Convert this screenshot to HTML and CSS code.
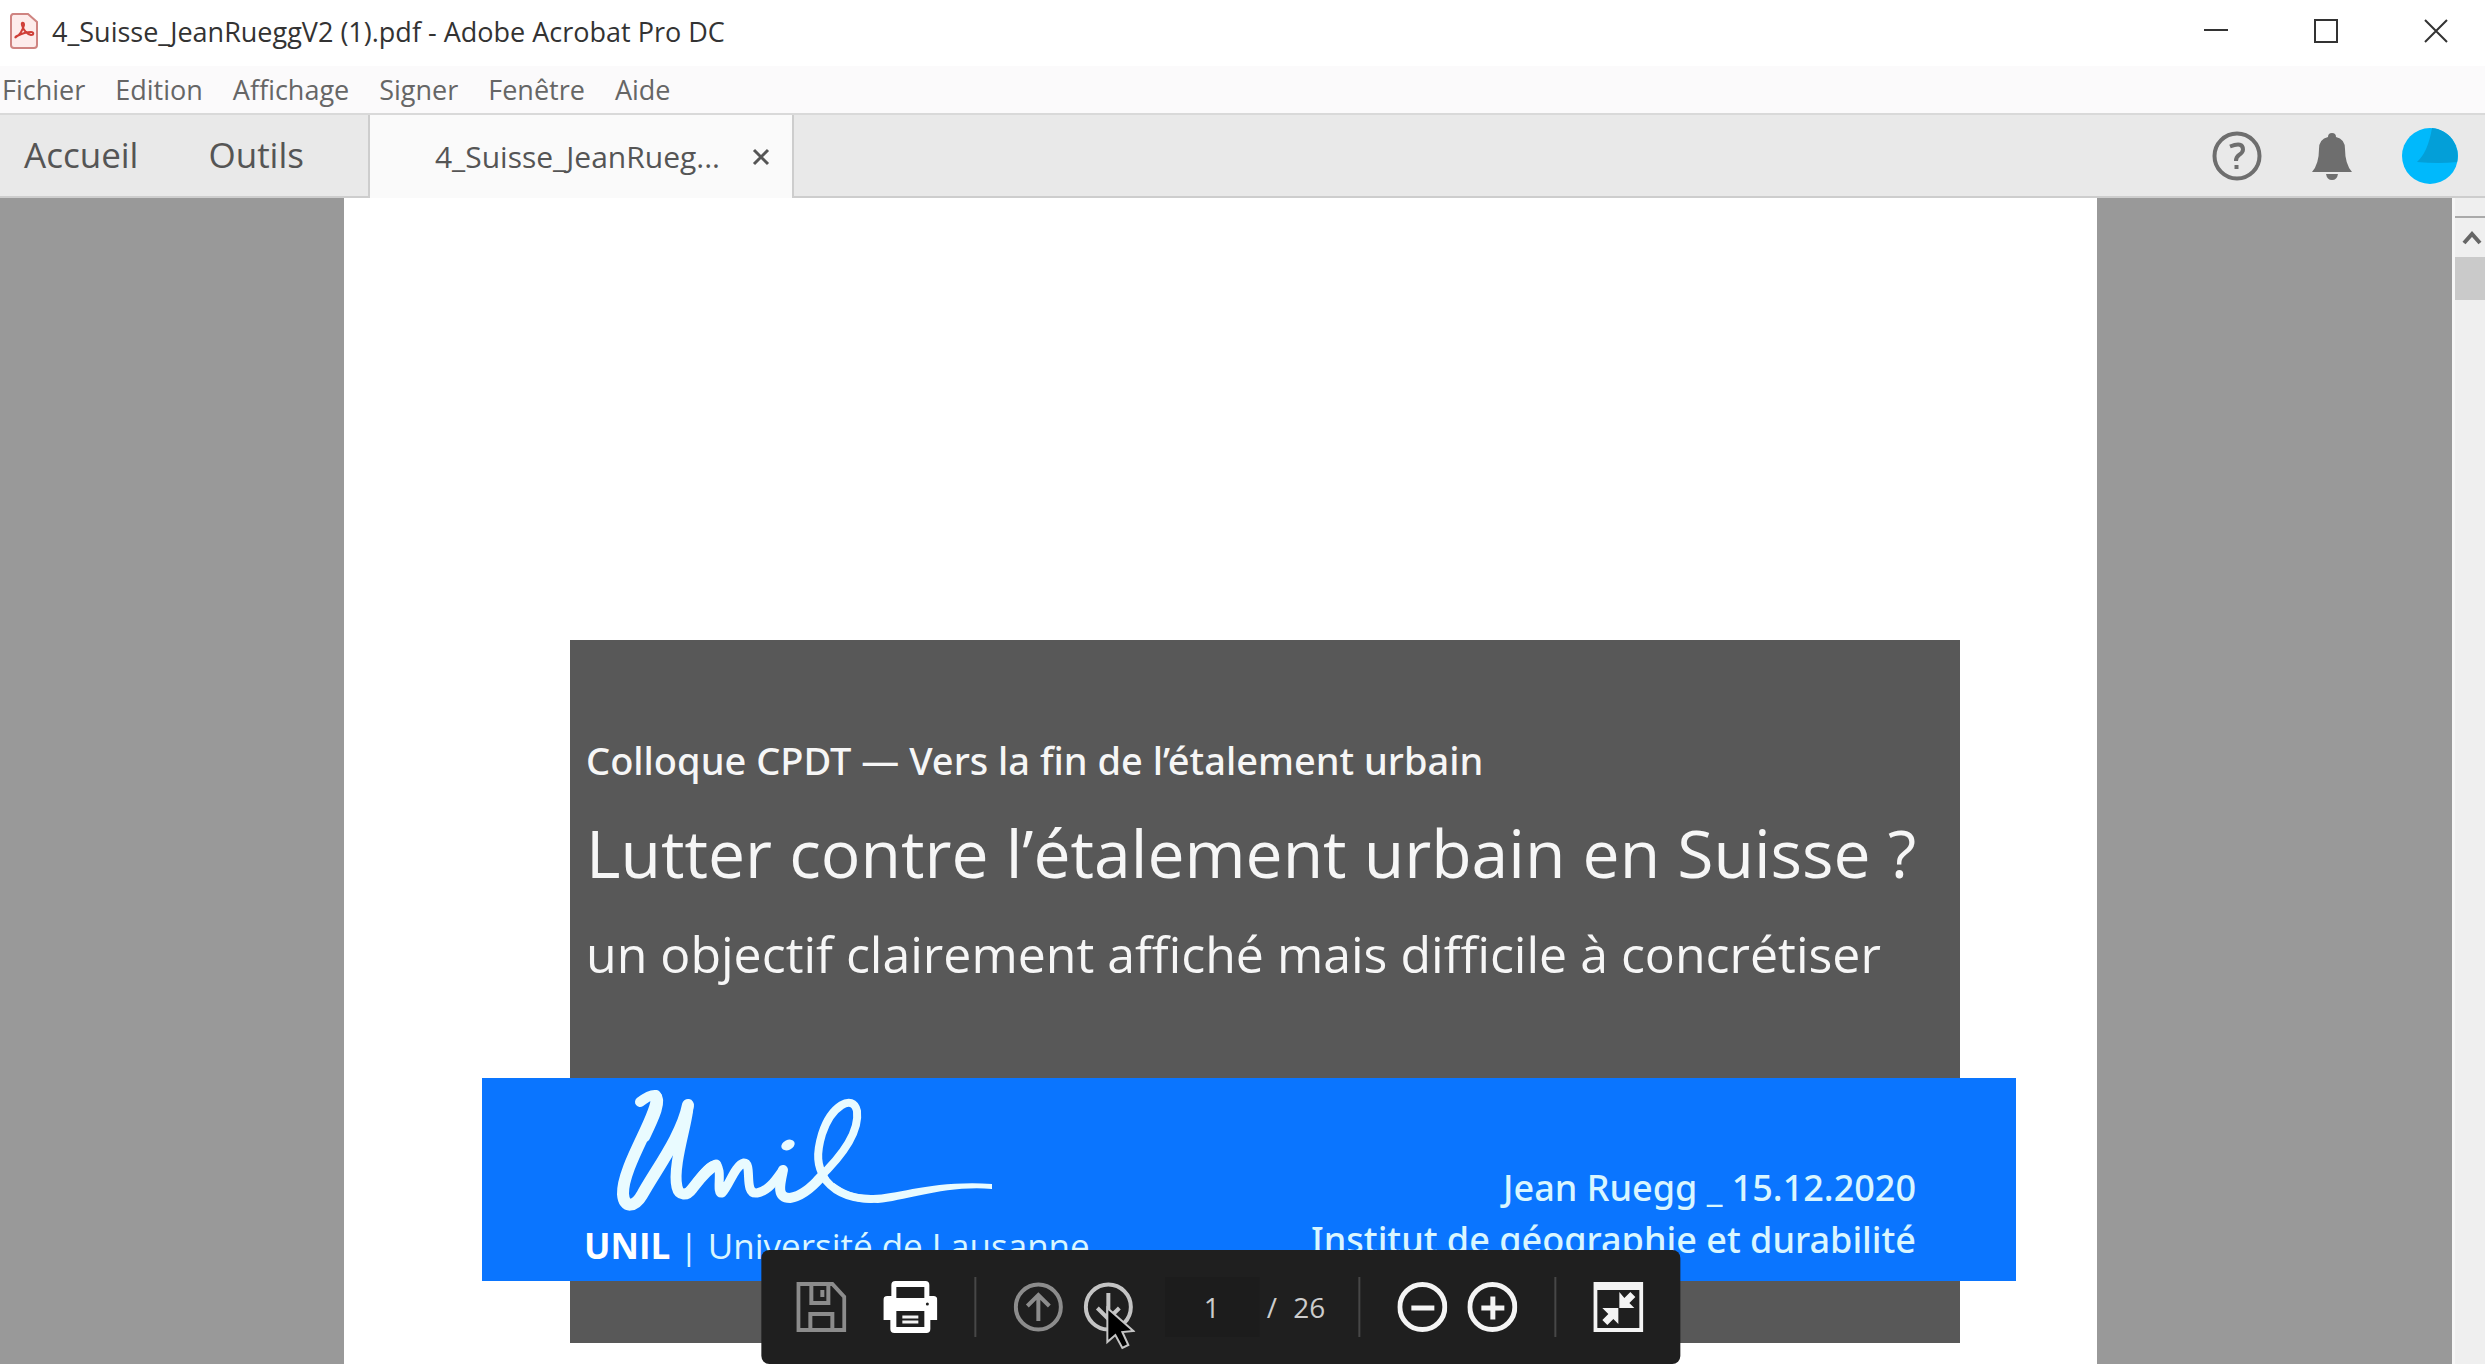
FILE: index.html
```
<!DOCTYPE html>
<html lang="fr">
<head>
    <meta charset="UTF-8">
    <meta name="viewport" content="width=device-width, initial-scale=1.0">
    <title>4_Suisse_JeanRueggV2 (1).pdf - Adobe Acrobat Pro DC</title>
    <link rel="stylesheet" href="styles.css">
</head>
<body>
    <!-- barre de titre -->
    <header class="titlebar">
        <svg class="app_icon" viewBox="0 0 30 38">
            <path d="M4 2h15l9 8v23a3 3 0 0 1-3 3H5a3 3 0 0 1-3-3V5a3 3 0 0 1 2-3z" fill="#fdeceb" stroke="#cf8481" stroke-width="2"/>
            <path d="M7 25c3-1 7-7 8-12 0-3-3-3-2 0 1 5 5 9 9 10 3 0 3-3 0-3-5 0-10 2-14 4-2 1-2 2-1 1z" fill="none" stroke="#cf3f38" stroke-width="2"/>
        </svg>
        <h1>4_Suisse_JeanRueggV2 (1).pdf - Adobe Acrobat Pro DC</h1>
        <div class="win_btns">
            <button aria-label="Réduire"><svg viewBox="0 0 24 24"><path d="M0 11h24"/></svg></button>
            <button aria-label="Agrandir"><svg viewBox="0 0 24 24"><path d="M1 1h22v22H1z"/></svg></button>
            <button aria-label="Fermer"><svg viewBox="0 0 24 24"><path d="M1 1l22 22M23 1L1 23"/></svg></button>
        </div>
    </header>

    <!-- menus -->
    <nav class="menubar">
        <button>Fichier</button>
        <button>Edition</button>
        <button>Affichage</button>
        <button>Signer</button>
        <button>Fenêtre</button>
        <button>Aide</button>
    </nav>

    <!-- onglets -->
    <div class="tabbar">
        <div class="home_tabs">
            <button>Accueil</button>
            <button>Outils</button>
        </div>
        <div class="doc_tab">
            <button>4_Suisse_JeanRueg...</button>
            <button class="close" aria-label="Fermer l'onglet"><svg viewBox="0 0 18 18"><path d="M2 2l14 14M16 2L2 16"/></svg></button>
        </div>
        <div class="account">
            <button aria-label="Aide">
                <svg width="50" height="50" viewBox="0 0 50 50" fill="none" stroke="#6e6e6e" stroke-width="4">
                    <circle cx="25" cy="25" r="22.5"/>
                    <path d="M18 15.500q13-5 13 3 0 3-4 5.500-3 2-3 6"/>
                    <path d="M24.500 34v4"/>
                </svg>
            </button>
            <button aria-label="Notifications">
                <svg width="40" height="48" viewBox="0 0 40 48" fill="#6e6e6e">
                    <path d="M16 5a4 4 0 0 1 8 0q9 2 9 12 0 15 7 23H0q7-8 7-23Q7 7 16 5z"/>
                    <path d="M14 42h12q-1 6-6 6t-6-6z"/>
                </svg>
            </button>
            <button aria-label="Compte">
                <svg width="56" height="56" viewBox="0 0 56 56">
                    <circle cx="28" cy="28" r="28" fill="#00b9fc"/>
                    <path d="M30 0a28 28 0 0 1 25 34q-18 2-40 0Q26 24 30 0z" fill="#039fd8"/>
                </svg>
            </button>
        </div>
    </div>

    <!-- document -->
    <main class="viewer">
        <div class="pages">
            <article class="page">
                <section class="cover">
                    <p class="event">Colloque CPDT — Vers la fin de l’étalement urbain</p>
                    <h2>Lutter contre l’étalement urbain en Suisse ?</h2>
                    <p class="subtitle">un objectif clairement affiché mais difficile à concrétiser</p>
                </section>
                <section class="band">
                    <div class="brand">
                        <svg class="signature" viewBox="610 1085 390 126" role="img" aria-label="Unil">
                            <path d="M640 1101Q650 1093 656 1094C662 1100 655 1115 645 1136" stroke-width="10"/>
                            <path d="M656 1096C661 1110 622 1165 623 1193C624 1208 635 1206 642 1194C655 1170 682 1135 688 1104" stroke-width="12"/>
                            <path d="M688 1105C688 1120 672 1165 677 1186C679 1195 687 1195 692 1188C700 1178 707 1168 716 1164" stroke-width="11"/>
                            <path d="M690 1190C700 1178 708 1164 715 1164C724 1166 715 1193 722 1192C729 1185 735 1164 744 1162C753 1162 743 1194 757 1192C768 1190 775 1180 782 1170" stroke-width="9"/>
                            <path d="M783 1169C780 1183 776 1197 790 1197C803 1195 814 1184 821 1176" stroke-width="10"/>
                            <path d="M817 1179C835 1162 860 1134 857 1110C853 1092 831 1105 822 1133C816 1153 817 1165 825 1178" stroke-width="8"/>
                            <path d="M822 1174C832 1190 848 1198 871 1198" stroke-width="8"/>
                            <path d="M992 1183C930 1179 895 1195 871 1194C855 1194 845 1190 834 1182L830 1187C845 1199 858 1202 878 1202C905 1200 945 1184 992 1188z" fill="#e9fbff" stroke="none"/>
                            <ellipse cx="788" cy="1144" rx="6" ry="4" transform="rotate(-25 788 1144)" fill="#e9fbff" stroke-width="2"/>
                        </svg>
                        <p><strong>UNIL</strong> | Université de Lausanne</p>
                    </div>
                    <div class="author">
                        <p>Jean Ruegg _ 15.12.2020</p>
                        <p>Institut de géographie et durabilité</p>
                    </div>
                </section>

                <!-- barre d'outils flottante -->
                <div class="toolbar">
                    <button class="save dim" aria-label="Enregistrer">
                        <svg width="50" height="50" viewBox="0 0 50 50" fill="none" stroke-width="4">
                            <path d="M2 2h34l12 13v33H2z"/>
                            <path d="M15 2v19h17V2M14 48V32h22v16"/>
                            <path d="M26 8v7"/>
                        </svg>
                    </button>
                    <button class="print" aria-label="Imprimer">
                        <svg width="54" height="52" viewBox="0 0 54 52">
                            <path fill="#fff" stroke="none" d="M12 0h30a4 4 0 0 1 4 4v11h4a4 4 0 0 1 4 4v20h-7v9a4 4 0 0 1-4 4H11a4 4 0 0 1-4-4v-9H0V19a4 4 0 0 1 4-4h4V4a4 4 0 0 1 4-4z"/>
                            <path fill="#1f1f1f" stroke="none" d="M13 6h28v11H13zM13 30h28v16H13z"/>
                            <path fill="none" stroke-width="3" d="M19 36h16M19 41h16"/>
                            <circle cx="44" cy="23" r="1.500" fill="#1f1f1f" stroke="none"/>
                        </svg>
                    </button>
                    <span class="sep"></span>
                    <button class="prev dim" aria-label="Page précédente">
                        <svg width="50" height="50" viewBox="0 0 50 50" fill="none" stroke-width="4">
                            <circle cx="25" cy="25" r="22.5"/>
                            <path d="M25 39V14M14 24l11-11 11 11"/>
                        </svg>
                    </button>
                    <button class="next" aria-label="Page suivante">
                        <svg width="50" height="50" viewBox="0 0 50 50" fill="none" stroke-width="4">
                            <circle cx="25" cy="25" r="22.5"/>
                            <path d="M25 11v25M14 26l11 11 11-11"/>
                        </svg>
                        <svg class="cursor" width="30" height="44" viewBox="0 0 30 44">
                            <path d="M2 2v34l8-7 7 13 6-3-6-13 11-1z" fill="#000" stroke-width="2"/>
                        </svg>
                    </button>
                    <input class="page_no" type="text" value="1" aria-label="Numéro de page">
                    <span class="total"><span>/</span><span>26</span></span>
                    <span class="sep"></span>
                    <button class="zoom_out" aria-label="Zoom arrière">
                        <svg width="50" height="50" viewBox="0 0 50 50" fill="none" stroke-width="5">
                            <circle cx="25" cy="25" r="22.5"/>
                            <path d="M14 26h23"/>
                        </svg>
                    </button>
                    <button class="zoom_in" aria-label="Zoom avant">
                        <svg width="50" height="50" viewBox="0 0 50 50" fill="none" stroke-width="5">
                            <circle cx="25" cy="25" r="22.5"/>
                            <path d="M14 26h23M25.500 14.500v23"/>
                        </svg>
                    </button>
                    <span class="sep"></span>
                    <button class="fit" aria-label="Ajuster à la page">
                        <svg width="50" height="50" viewBox="0 0 50 50">
                            <path fill="none" stroke-width="4" d="M2 2h46v46H2z"/>
                            <path fill="#f4f4f4" stroke="none" d="M2 2h46v6H2zM26 10v16h15l-5-5 6-6-5-5-6 6zM25 42V26H9l6 6-6 6 5 5 6-6z"/>
                        </svg>
                    </button>
                </div>
            </article>
        </div>
        <div class="scrollbar">
            <button aria-label="Défiler vers le haut"><svg viewBox="0 0 20 14"><path d="M2 12l8-9 8 9"/></svg></button>
            <div class="thumb"></div>
        </div>
    </main>
</body>
</html>
```
FILE: styles.css
```
*{
    margin: 0;
    padding: 0;
    box-sizing: border-box;
}
body{
    display: flex;
    flex-direction: column;
    height: 100vh;
    overflow: hidden;
    font-family: "Open Sans", "Noto Sans", sans-serif;
    background: #fff;
    color: #333;
}
button, input{
    font: inherit;
    color: inherit;
    background: none;
    border: none;
}
button{
    cursor: pointer;
}
svg{
    display: block;
}

/* barre de titre */
.titlebar{
    display: flex;
    align-items: center;
    height: 66px;
    padding: 0 37px 4px 9px;
}
.titlebar .app_icon{
    width: 30px;
    height: 38px;
}
.titlebar h1{
    flex: 1;
    margin-left: 13px;
    font-size: 27px;
    font-weight: normal;
}
.win_btns{
    display: flex;
    gap: 86px;
}
.win_btns svg{
    width: 24px;
    height: 24px;
    fill: none;
    stroke: #333;
    stroke-width: 2;
}

/* menus */
.menubar{
    display: flex;
    gap: 30px;
    height: 49px;
    padding: 0 2px;
    background: #fbfafb;
    border-bottom: 2px solid #d9d9d9;
    color: #666;
    font-size: 27px;
}

/* onglets */
.tabbar{
    display: flex;
    height: 83px;
    background: #e9e9e9;
    color: #555;
}
.home_tabs{
    display: flex;
    gap: 70px;
    padding: 0 64px 2px 24px;
    font-size: 35px;
    border-bottom: 2px solid #cdcdcd;
}
.doc_tab{
    display: flex;
    align-items: center;
    gap: 32px;
    padding: 0 22px 0 65px;
    background: #fafafa;
    border-left: 2px solid #cdcdcd;
    border-right: 2px solid #cdcdcd;
    font-size: 30px;
}
.doc_tab .close svg{
    width: 18px;
    height: 18px;
    fill: none;
    stroke: #555;
    stroke-width: 3;
}
.account{
    flex: 1;
    display: flex;
    align-items: center;
    justify-content: flex-end;
    padding-right: 27px;
    border-bottom: 2px solid #cdcdcd;
}
.account button{
    margin-left: 50px;
}

/* document */
.viewer{
    flex: 1;
    display: flex;
    min-height: 0;
    background: #999;
}
.pages{
    flex: 1;
    display: grid;
    grid-template-columns: 344fr 1753fr 355fr;
}
.page{
    grid-column: 2;
    position: relative;
    display: grid;
    grid-template-columns: 138fr 88fr 1390fr 56fr 81fr;
    grid-template-rows: 438px 203px 62px;
    padding-top: 442px;
    background: #fff;
}
.cover{
    grid-column: 3;
    grid-row: 1 / 4;
    padding: 94px 16px 0;
    background: #585858;
    color: #f6f6f6;
    white-space: nowrap;
}
.cover .event{
    font-family: "Noto Sans", "Open Sans", sans-serif;
    font-size: 38px;
    line-height: 52px;
    font-weight: 500;
}
.cover h2{
    margin-top: 20px;
    font-size: 66px;
    line-height: 92px;
    font-weight: normal;
}
.cover .subtitle{
    margin-top: 22px;
    font-size: 50px;
    line-height: 68px;
}
.band{
    grid-column: 2 / 5;
    grid-row: 2;
    display: flex;
    justify-content: space-between;
    padding: 8px 100px 0 102px;
    background: #0a75ff;
    color: #d9f6ff;
    white-space: nowrap;
}
.signature{
    width: 390px;
    height: 126px;
    margin-left: 26px;
    fill: none;
    stroke: #e9fbff;
    stroke-linecap: round;
    stroke-linejoin: round;
}
.brand p{
    margin-top: 8px;
    font-size: 35px;
    line-height: 52px;
}
.brand strong{
    color: #fff;
}
.author{
    padding-top: 76px;
    font-family: "Noto Sans", "Open Sans", sans-serif;
    font-size: 36px;
    line-height: 52px;
    font-weight: 500;
    text-align: right;
}

/* barre d'outils flottante */
.toolbar{
    position: absolute;
    left: 50%;
    bottom: 0;
    transform: translateX(-50%);
    display: flex;
    align-items: center;
    height: 114px;
    padding: 0 37px 0 35px;
    border-radius: 8px;
    background: #1f1f1f;
    color: #ccc;
    font-size: 28px;
}
.toolbar svg{
    stroke: #f4f4f4;
}
.toolbar .dim svg{
    stroke: #8c8c8c;
}
.toolbar .print{
    margin-left: 37px;
}
.toolbar .sep{
    width: 2px;
    height: 60px;
    margin: 0 37px;
    background: #474747;
}
.toolbar .next{
    position: relative;
    margin-left: 20px;
}
.toolbar .next svg{
    stroke: #c4c4c4;
}
.toolbar .next .cursor{
    position: absolute;
    left: 22px;
    top: 24px;
}
.page_no{
    width: 94px;
    height: 60px;
    margin-left: 32px;
    background: #1c1c1c;
    text-align: center;
}
.total{
    display: flex;
    gap: 16px;
    margin: 0 -4px 0 8px;
}
.toolbar .zoom_in{
    margin-left: 20px;
}

/* defilement */
.scrollbar{
    width: 33px;
    padding-top: 18px;
    background: #efefef;
    border-left: 3px solid #f6f6f6;
}
.scrollbar button{
    display: block;
    width: 100%;
    height: 41px;
    padding-left: 7px;
    border-top: 2px solid #aaa;
}
.scrollbar svg{
    width: 20px;
    height: 14px;
    fill: none;
    stroke: #666;
    stroke-width: 4;
}
.scrollbar .thumb{
    height: 43px;
    background: #cacaca;
}
```
